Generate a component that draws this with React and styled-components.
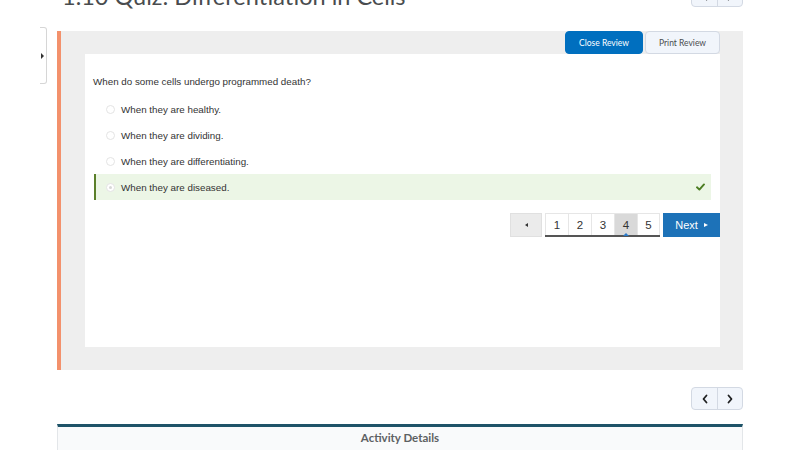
import React from "react";
import styled, { createGlobalStyle } from "styled-components";

const Global = createGlobalStyle`
  html, body { margin: 0; padding: 0; background: #fff; }
  body { font-family: "Liberation Sans", Arial, sans-serif; overflow: hidden; }
  * { box-sizing: border-box; }
`;

const Page = styled.div`
  position: relative;
  width: 800px;
  height: 450px;
  padding-left: 57px;
  overflow: hidden;
`;

const SideTab = styled.div`
  position: absolute;
  left: 40px;
  top: 27px;
  width: 7px;
  height: 57px;
  background: #fff;
  border: 1px solid #d6d6d6;
  border-left: none;
  border-radius: 0 3px 3px 0;
  display: flex;
  align-items: center;
  &::after {
    content: "";
    margin-left: 1px;
    border-left: 3px solid #333;
    border-top: 3px solid transparent;
    border-bottom: 3px solid transparent;
  }
`;

const Main = styled.div`
  width: 686px;
  display: flex;
  flex-direction: column;
`;

const Header = styled.div`
  display: flex;
  justify-content: space-between;
  align-items: flex-end;
  margin-top: -16px;
  height: 23px;
  margin-bottom: 24px;
`;

const Title = styled.h1`
  margin: 0 0 -4px 5px;
  font-family: Lato, "Liberation Sans", sans-serif;
  font-weight: 400;
  font-size: 23.5px;
  line-height: 30px;
  color: #494c4e;
  white-space: nowrap;
`;

const NavGroup = styled.div`
  display: flex;
  height: 23px;
  border: 1px solid #d3d9e3;
  border-radius: 4px;
  background: #f1f5fb;
  overflow: hidden;
`;

const NavButton = styled.div`
  width: 25px;
  display: flex;
  align-items: center;
  justify-content: center;
  color: #494c4e;
  & + & { border-left: 1px solid #d3d9e3; }
`;

const Panel = styled.div`
  display: flex;
  flex-direction: column;
  background: #eeeeee;
  border-left: 4px solid #f3916c;
  padding: 0 23px 23px 24px;
`;

const ButtonRow = styled.div`
  display: flex;
  justify-content: flex-end;
  gap: 2px;
  height: 23px;
`;

const ReviewButton = styled.div`
  height: 23px;
  width: ${(p) => (p.$primary ? "78px" : "75px")};
  display: flex;
  align-items: center;
  justify-content: center;
  font-family: Lato, "Liberation Sans", sans-serif;
  font-size: 8.5px;
  border-radius: 4px;
  background: ${(p) => (p.$primary ? "#006fbf" : "#f1f5fb")};
  color: ${(p) => (p.$primary ? "#fff" : "#494c4e")};
  border: 1px solid ${(p) => (p.$primary ? "#006fbf" : "#d3d9e3")};
`;

const Card = styled.div`
  background: #fff;
  height: 293px;
  padding-top: 21px;
  display: flex;
  flex-direction: column;
`;

const Question = styled.div`
  padding: 0 9px 0 8px;
  font-size: 9.8px;
  line-height: 13px;
  color: #333;
  margin-bottom: 8px;
`;

const Options = styled.div`
  display: flex;
  flex-direction: column;
  padding: 0 9px 0 9px;
`;

const Option = styled.div`
  height: 26px;
  display: flex;
  align-items: center;
  padding-left: 10px;
  padding-right: 6px;
  font-size: 9.8px;
  color: #333;
  border-left: 2px solid ${(p) => (p.$correct ? "#5b7f2a" : "transparent")};
  background: ${(p) => (p.$correct ? "#ecf6e6" : "transparent")};
`;

const Radio = styled.span`
  width: 9px;
  height: 9px;
  border-radius: 50%;
  border: 1px solid #e4e4e4;
  background: #fff;
  margin-right: 6px;
  display: flex;
  align-items: center;
  justify-content: center;
  &::after {
    content: "";
    display: ${(p) => (p.$checked ? "block" : "none")};
    width: 3px;
    height: 3px;
    border-radius: 50%;
    background: #d8d8d8;
  }
`;

const OptionText = styled.span`
  flex: 1;
`;

const Pager = styled.div`
  display: flex;
  justify-content: flex-end;
  gap: 3px;
  margin-top: 13px;
  height: 24px;
`;

const PrevButton = styled.div`
  width: 32px;
  background: #ebebeb;
  border: 1px solid #e0e0e0;
  display: flex;
  align-items: center;
  justify-content: center;
  &::after {
    content: "";
    border-right: 3px solid #333;
    border-top: 2.5px solid transparent;
    border-bottom: 2.5px solid transparent;
  }
`;

const Pages = styled.div`
  display: flex;
  border-bottom: 2px solid #555;
  border-top: 1px solid #e6e6e6;
`;

const PageItem = styled.div`
  position: relative;
  width: 23px;
  display: flex;
  align-items: center;
  justify-content: center;
  font-size: 11.5px;
  color: #333;
  background: ${(p) => (p.$active ? "#d9d9d9" : "#fff")};
  border-left: 1px solid #e6e6e6;
  &:last-child { border-right: 1px solid #e6e6e6; }
  &::after {
    content: "";
    display: ${(p) => (p.$active ? "block" : "none")};
    position: absolute;
    bottom: -1px;
    left: 50%;
    transform: translateX(-50%);
    border-bottom: 3px solid #2b7ac9;
    border-left: 3px solid transparent;
    border-right: 3px solid transparent;
  }
`;

const NextButton = styled.div`
  width: 57px;
  background: #1d72b8;
  color: #fff;
  font-size: 11px;
  display: flex;
  align-items: center;
  justify-content: center;
  gap: 6px;
  &::after {
    content: "";
    border-left: 4px solid #fff;
    border-top: 2.5px solid transparent;
    border-bottom: 2.5px solid transparent;
  }
`;

const BottomNav = styled.div`
  display: flex;
  justify-content: flex-end;
  margin-top: 17px;
`;

const Activity = styled.div`
  margin-top: 14px;
  border-top: 3px solid #1e5368;
  border-left: 1px solid #e3e6e9;
  border-right: 1px solid #e3e6e9;
  background: #f9fafb;
  height: 40px;
  display: flex;
  justify-content: center;
  padding-top: 4px;
  font-family: Lato, "Liberation Sans", sans-serif;
  font-weight: 700;
  font-size: 11.5px;
  color: #5d6163;
`;

const Chevron = ({ dir }) => (
  <svg width="8" height="10" viewBox="0 0 8 10">
    <path
      d={dir === "left" ? "M5.5 1.5 L2.5 5 L5.5 8.5" : "M2.5 1.5 L5.5 5 L2.5 8.5"}
      fill="none"
      stroke="#202122"
      strokeWidth="1.8"
      strokeLinecap="round"
      strokeLinejoin="round"
    />
  </svg>
);

const Check = () => (
  <svg width="9" height="8" viewBox="0 0 9 8">
    <path d="M1 4.3 L3.4 6.6 L8 1.4" fill="none" stroke="#4c7d22" strokeWidth="1.9" strokeLinecap="round" strokeLinejoin="round" />
  </svg>
);

const options = [
  "When they are healthy.",
  "When they are dividing.",
  "When they are differentiating.",
  "When they are diseased.",
];

export default function App() {
  return (
    <>
      <Global />
      <Page>
        <SideTab />
        <Main>
          <Header>
            <Title>1.10 Quiz: Differentiation in Cells</Title>
            <NavGroup>
              <NavButton><Chevron dir="left" /></NavButton>
              <NavButton><Chevron dir="right" /></NavButton>
            </NavGroup>
          </Header>
          <Panel>
            <ButtonRow>
              <ReviewButton $primary>Close Review</ReviewButton>
              <ReviewButton>Print Review</ReviewButton>
            </ButtonRow>
            <Card>
              <Question>When do some cells undergo programmed death?</Question>
              <Options>
                {options.map((o, i) => {
                  const correct = i === 3;
                  return (
                    <Option key={o} $correct={correct}>
                      <Radio $checked={correct} />
                      <OptionText>{o}</OptionText>
                      {correct && <Check />}
                    </Option>
                  );
                })}
              </Options>
              <Pager>
                <PrevButton />
                <Pages>
                  {[1, 2, 3, 4, 5].map((n) => (
                    <PageItem key={n} $active={n === 4}>{n}</PageItem>
                  ))}
                </Pages>
                <NextButton>Next</NextButton>
              </Pager>
            </Card>
          </Panel>
          <BottomNav>
            <NavGroup>
              <NavButton><Chevron dir="left" /></NavButton>
              <NavButton><Chevron dir="right" /></NavButton>
            </NavGroup>
          </BottomNav>
          <Activity>Activity Details</Activity>
        </Main>
      </Page>
    </>
  );
}
